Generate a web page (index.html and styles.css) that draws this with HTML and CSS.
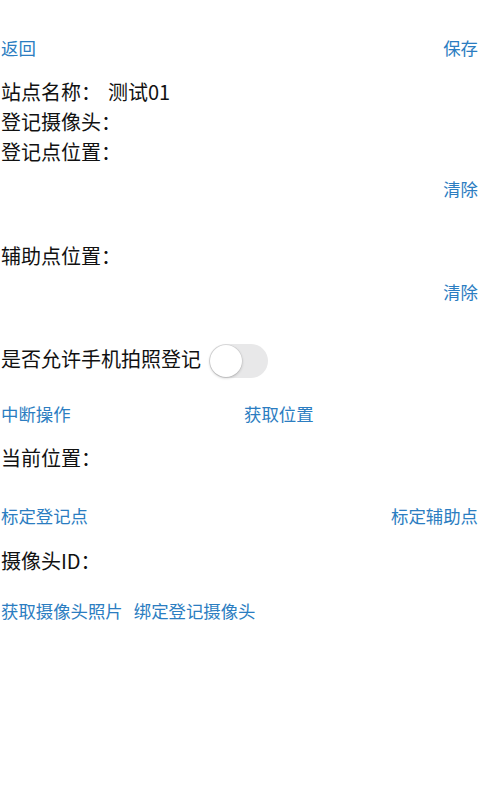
FILE: index.html
```html
<!DOCTYPE html>
<html lang="zh-CN">
<head>
<meta charset="utf-8">
<title>站点</title>
<link rel="stylesheet" href="styles.css">
</head>
<body>
<div class="page">
  <div class="row split nav">
    <span class="link">返回</span>
    <span class="link">保存</span>
  </div>

  <div class="row text first"><span>站点名称：</span><span class="value">测试01</span></div>
  <div class="row text">登记摄像头：</div>
  <div class="row text">登记点位置：</div>
  <div class="row end clear1"><span class="link">清除</span></div>

  <div class="row text aux">辅助点位置：</div>
  <div class="row end clear2"><span class="link">清除</span></div>

  <div class="row text toggle-row">
    <span>是否允许手机拍照登记</span>
    <span class="switch"><span class="knob"></span></span>
  </div>

  <div class="row halves ops">
    <span class="link">中断操作</span>
    <span class="link second">获取位置</span>
  </div>

  <div class="row text cur">当前位置：</div>

  <div class="row split mark">
    <span class="link">标定登记点</span>
    <span class="link">标定辅助点</span>
  </div>

  <div class="row text cam">摄像头ID：</div>

  <div class="row cam-actions">
    <span class="link">获取摄像头照片</span>
    <span class="link">绑定登记摄像头</span>
  </div>
</div>
</body>
</html>
```

FILE: styles.css
```css
html, body {
  margin: 0;
  padding: 0;
  background: #ffffff;
}

body {
  font-family: "Noto Sans CJK SC", "Noto Sans", "Liberation Sans", sans-serif;
  color: #111111;
  width: 480px;
  height: 800px;
  overflow: hidden;
}

.page {
  padding: 33px 2px 0 1px;
  display: flex;
  flex-direction: column;
}

.row {
  height: 30px;
  display: flex;
  align-items: center;
}

.text {
  font-size: 20px;
  line-height: 30px;
}

.link {
  color: #2b7dc1;
  font-size: 17.4px;
  line-height: 30px;
}

.split {
  justify-content: space-between;
}

.end {
  justify-content: flex-end;
}

.first {
  margin-top: 14px;
}

.value {
  margin-left: 7px;
}

.clear1 {
  margin-top: 7px;
}

.aux {
  margin-top: 37px;
}

.clear2 {
  margin-top: 6px;
}

.toggle-row {
  margin-top: 36px;
  height: 36px;
  gap: 8px;
}

.toggle-row > span:first-child {
  margin-top: -4px;
}

.switch {
  position: relative;
  width: 59px;
  height: 34px;
  border-radius: 17px;
  background: #e8e8e9;
  box-sizing: border-box;
  flex: none;
}

.knob {
  position: absolute;
  left: 1px;
  top: 1px;
  width: 32px;
  height: 32px;
  border-radius: 50%;
  background: #ffffff;
  box-shadow: 0 1px 3px rgba(0, 0, 0, 0.22), 0 0 0 0.5px rgba(0, 0, 0, 0.08);
}

.halves {
  margin-top: 20px;
  display: grid;
  grid-template-columns: 243px 1fr;
  align-items: center;
}

.cur {
  margin-top: 14px;
}

.mark {
  margin-top: 28px;
}

.cam {
  margin-top: 15px;
}

.cam-actions {
  margin-top: 20px;
  gap: 11px;
}
```
